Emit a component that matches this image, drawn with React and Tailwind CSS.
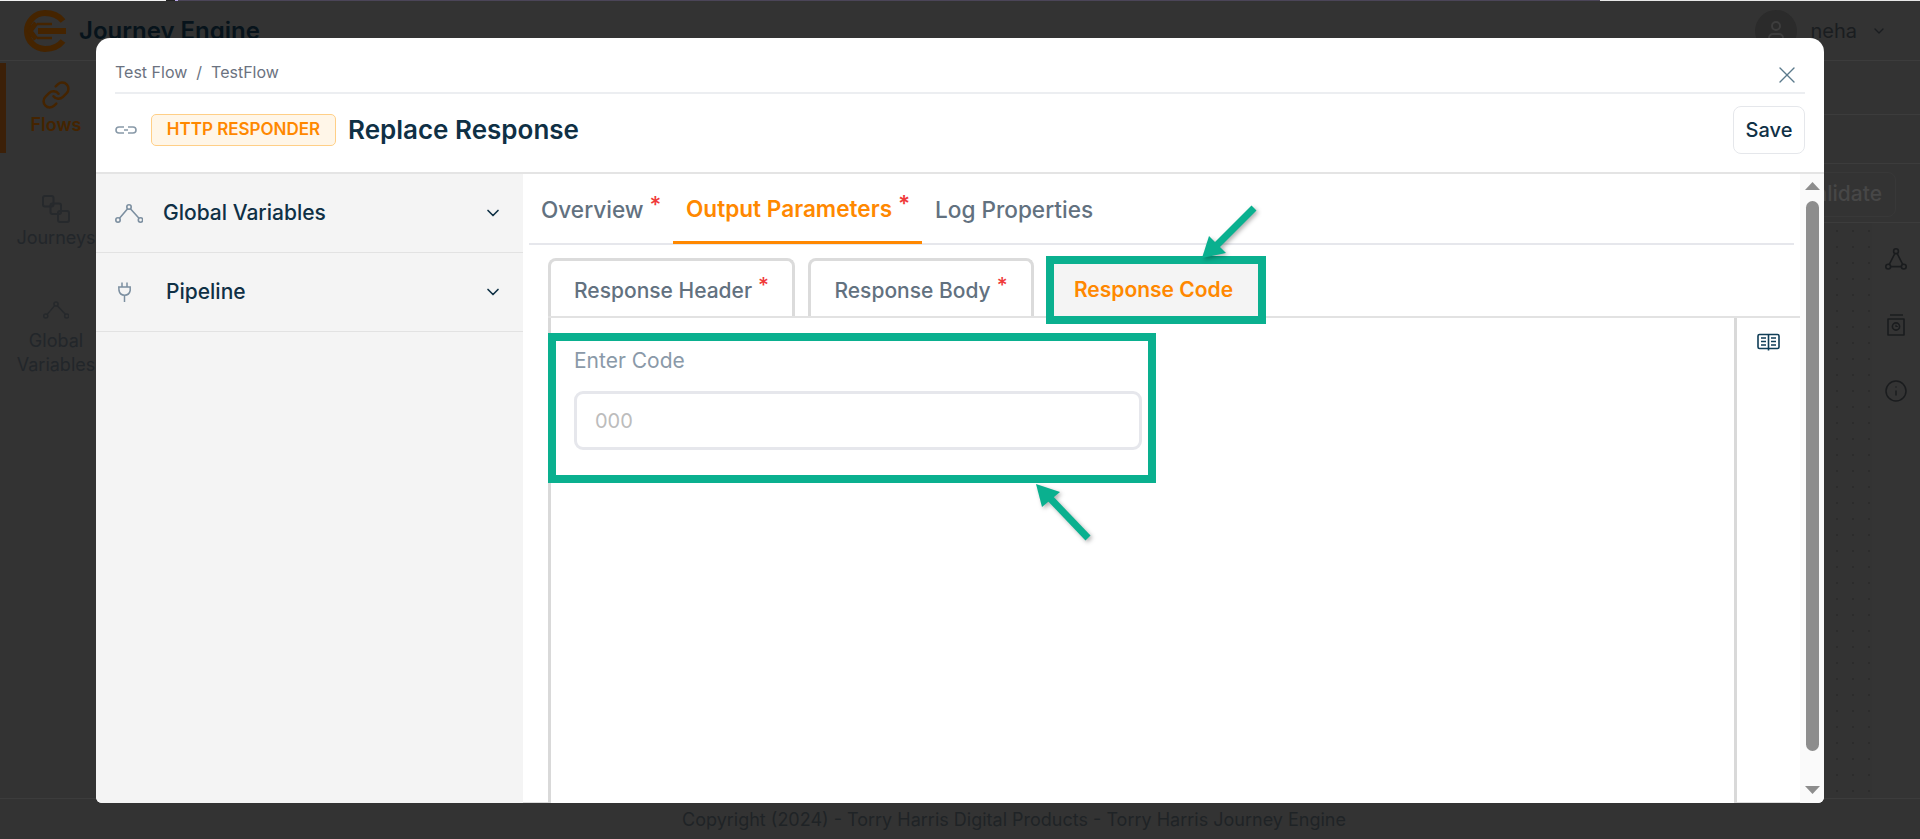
import { ChevronDown, Info, Link, User, X } from 'lucide-react'

const INTER = { fontFamily: 'Inter, "Liberation Sans", sans-serif' }

function Logo() {
  return (
    <svg width="42" height="42" viewBox="0 0 42 42" fill="none" stroke="#452400">
      <path d="M39 11 C35 6 29 3 21 3 A18 18 0 0 0 21 39 C29 39 35 36 39 31" strokeWidth="6" />
      <path d="M13 14 H28 M13 28 H28" strokeWidth="2.5" />
      <path d="M14 21 H42" strokeWidth="6" />
      <path d="M12 13 L6 21 L12 29" strokeWidth="5" />
    </svg>
  )
}

function ChainIcon() {
  return (
    <svg width="22" height="8" viewBox="0 0 22 8" fill="none" stroke="#8899a8" strokeWidth="1.6">
      <path d="M9 1 H4 A3 3 0 0 0 4 7 H9 M9 4 H13 M13 1 H18 A3 3 0 0 1 18 7 H13" />
    </svg>
  )
}

function NodesIcon({ width = 28, height = 19, color = '#7c8fa0', stroke = 1.6 }) {
  return (
    <svg width={width} height={height} viewBox="0 0 28 19" fill="none" stroke={color} strokeWidth={stroke}>
      <circle cx="14" cy="3" r="2.2" />
      <circle cx="3" cy="16" r="2.2" />
      <circle cx="25.5" cy="16" r="2.2" />
      <path d="M12.6 4.8 L4.5 14.2 M15.4 4.8 L24 14.2" />
    </svg>
  )
}

function TriangleIcon() {
  return (
    <svg width="22" height="22" viewBox="0 0 22 22" fill="none" stroke="#1a1c1e" strokeWidth="1.6">
      <circle cx="11" cy="3.2" r="2.4" />
      <circle cx="3.2" cy="18.6" r="2.4" />
      <circle cx="18.8" cy="18.6" r="2.4" />
      <path d="M9.9 5.4 L4.3 16.4 M12.1 5.4 L17.7 16.4 M5.6 18.6 H16.4" />
    </svg>
  )
}

function PlugIcon() {
  return (
    <svg width="13" height="20" viewBox="0 0 13 20" fill="none" stroke="#7c8fa0" strokeWidth="1.5">
      <path d="M4 0.5 V5 M9 0.5 V5 M0.8 5 H12.2 V8.5 A5.7 5.7 0 0 1 1 8.5 Z M6.5 14 V20" />
    </svg>
  )
}

function JourneysIcon() {
  return (
    <svg width="28" height="28" viewBox="0 0 28 28" fill="none" stroke="#26292c" strokeWidth="2">
      <rect x="1" y="1" width="10.5" height="10.5" rx="2" />
      <rect x="8.5" y="8.5" width="10.5" height="10.5" rx="2" />
      <rect x="16" y="16" width="11" height="11" rx="2" />
    </svg>
  )
}

function BookIcon() {
  return (
    <svg width="23" height="18" viewBox="0 0 23 18" fill="none" stroke="#0f3d57" strokeWidth="1.6">
      <rect x="1" y="1.5" width="21" height="14" rx="1.5" />
      <path d="M11.5 1.5 V17.5" />
      <path d="M4 5 H9 M4 8.5 H9 M4 12 H9 M14 5 H19 M14 8.5 H19 M14 12 H19" strokeWidth="1.7" />
    </svg>
  )
}

function HistoryIcon() {
  return (
    <svg width="18" height="22" viewBox="0 0 18 22" fill="none" stroke="#1a1c1e" strokeWidth="1.6">
      <path d="M3 1 H16 M1 5 H17 V21 H1 Z" strokeLinejoin="round" />
      <circle cx="9" cy="12.5" r="3.6" />
      <path d="M9 10.8 V12.5 H10.8" strokeWidth="1.2" />
    </svg>
  )
}

function Star() {
  return <span className="text-[#f03a3a] relative -top-[5px] ml-[6px]">*</span>
}

function NavItem({ icon, label, active, labelGap = 'mt-[3px]' }) {
  return (
    <div className={`flex flex-col items-center ${active ? 'h-full justify-center border-l-[6px] border-[#3c2008] text-[#452400] font-semibold pr-[6px]' : 'text-[#22262a]'}`}>
      {icon}
      <span className={`text-[18px] leading-[24px] text-center ${labelGap}`}>{label}</span>
    </div>
  )
}

function SideRow({ icon, label, height, gap }) {
  return (
    <div className={`flex items-center pl-[19px] pr-[20px] border-b border-[#e2e2e2] ${height}`}>
      <div className={`flex items-center ${gap}`}>
        {icon}
        <span className="text-[21px] font-medium text-[#0f3045]">{label}</span>
      </div>
      <ChevronDown size={20} strokeWidth={2} className="ml-auto text-[#0f3045]" />
    </div>
  )
}

function Arrow({ className, points, line }) {
  return (
    <svg className={`absolute ${className}`} viewBox="0 0 80 70" width="80" height="70" fill="#0ab08f">
      <g style={{ filter: 'drop-shadow(2px 2px 2px rgba(0,0,0,0.3))' }}>
        <path d={line} stroke="#0ab08f" strokeWidth="7" fill="none" />
        <polygon points={points} />
      </g>
    </svg>
  )
}

export default function App() {
  return (
    <div className="relative w-full h-[839px] overflow-hidden flex flex-col bg-[#333333]" style={INTER}>
      {/* strip of the browser above the page */}
      <div className="h-px flex shrink-0">
        <div className="w-[166px] bg-[#f2f2f2]" />
        <div className="w-[9px] bg-[#222222]" />
        <div className="w-[3px] bg-[#b9a6e8]" />
        <div className="w-[1422px] bg-[#4b4558]" />
        <div className="flex-1 bg-[#e8e8e8]" />
      </div>

      {/* app behind the dialog */}
      <header className="h-[60px] shrink-0 flex items-center pl-6 border-b border-[#3c3c3c]">
        <Logo />
        <span className="ml-[13px] text-[24px] font-semibold text-[#07131b]">Journey Engine</span>
        <div className="ml-auto flex items-center pr-[33px]">
          <div className="w-[42px] h-[42px] rounded-full bg-[#2b2b2b] flex items-center justify-center">
            <User size={24} className="text-[#3d3d3d]" />
          </div>
          <span className="ml-[13px] text-[20px] text-[#1a1d20]">neha</span>
          <ChevronDown size={16} className="ml-[14px] text-[#1a1d20]" />
        </div>
      </header>

      <div className="flex-1 flex min-h-0">
        <nav className="w-[112px] shrink-0 pt-[2px] flex flex-col">
          <div className="h-[90px]">
            <NavItem active icon={<Link size={30} strokeWidth={2} />} label="Flows" />
          </div>
          <div className="mt-[42px]">
            <NavItem icon={<JourneysIcon />} label="Journeys" />
          </div>
          <div className="mt-[50px]">
            <NavItem
              icon={<NodesIcon width={26} height={20} color="#26292c" />}
              labelGap="mt-[9px]"
              label={<>Global<br />Variables</>}
            />
          </div>
        </nav>
        <div className="flex-1 flex flex-col min-w-0">
          <div className="h-[54px] border-b border-[#3c3c3c]" />
          <div className="h-[49px] border-b border-[#3c3c3c]" />
          <div className="h-[59px] pt-[2px] border-b border-[#3c3c3c] flex items-center justify-end pr-6">
            <div className="h-[45px] px-[13px] flex items-center rounded-lg border border-[#383838] text-[21px] font-medium text-[#474747]">Validate</div>
          </div>
          <div className="flex-1 flex">
            <div className="flex-1 bg-[radial-gradient(#2c2c2c_1px,transparent_1px)] bg-[size:16px_16px] bg-[position:5px_0px]" />
            <aside className="w-[48px] bg-[#343434] flex flex-col items-center pt-[25px]">
              <TriangleIcon />
              <div className="mt-[44px]"><HistoryIcon /></div>
              <Info size={24} strokeWidth={1.5} className="mt-[43px] text-[#1a1c1e]" />
            </aside>
          </div>
        </div>
      </div>

      <footer className="h-[41px] shrink-0 border-t border-[#3c3c3c] flex items-center justify-center pl-[108px] text-[18px] text-[#1f2326]">
        Copyright (2024) - Torry Harris Digital Products - Torry Harris Journey Engine
      </footer>

      {/* dialog */}
      <div className="absolute left-[96px] top-[38px] w-[1728px] h-[765px] bg-white rounded-t-[14px] rounded-b-[6px] overflow-hidden flex flex-col">
        <div className="px-[19px] shrink-0">
          <div className="h-[56px] pt-[13px] flex items-center justify-between border-b-2 border-[#eceef1] text-[16px] text-[#6b7280]">
            <span>Test Flow&nbsp; /&nbsp; TestFlow</span>
            <X size={28} strokeWidth={1.2} className="text-[#5b7a8c] mr-[4px] mt-[7px]" />
          </div>
          <div className="h-[78px] pb-[6px] flex items-center">
            <ChainIcon />
            <span className="ml-[14px] h-[32px] w-[185px] flex items-center justify-center rounded-[5px] border border-[#ffcf87] bg-[#fff6e8] text-[17px] font-semibold text-[#ff8800]">HTTP RESPONDER</span>
            <span className="ml-[12px] -mt-[2px] text-[26px] font-semibold text-[#0f3045]">Replace Response</span>
            <button className="ml-auto w-[72px] h-[48px] rounded-lg border border-[#e5e7eb] text-[20px] font-medium text-[#0f3045]">Save</button>
          </div>
        </div>

        <div className="flex-1 flex min-h-0 border-t-2 border-[#e4e4e4]">
          <aside className="w-[427px] shrink-0 bg-[#f4f4f4]">
            <SideRow icon={<NodesIcon />} label="Global Variables" height="h-[79px]" gap="gap-[20px]" />
            <SideRow icon={<PlugIcon />} label="Pipeline" height="h-[79px]" gap="gap-[35px] pl-[3px]" />
          </aside>

          <main className="flex-1 flex min-w-0">
            <div className="flex-1 flex flex-col min-w-0">
              <div className="mx-[6px] h-[71px] shrink-0 flex border-b-2 border-[#e6e7ec] text-[22.6px] font-medium text-[#62717f]">
                <div className="w-[144px] pl-[12px] pt-[2px] flex items-center">Overview<Star /></div>
                <div className="w-[249px] pl-[13px] pt-[2px] flex items-center h-[70px] border-b-[3px] border-[#ff8800] text-[#ff8800] font-semibold">Output Parameters<Star /></div>
                <div className="pl-[13px] pt-[2px] flex items-center">Log Properties</div>
              </div>

              <div className="flex-1 flex min-h-0">
                <div className="w-[25px] shrink-0 border-b border-[#dcdcdc]" />
                <div className="flex-1 flex flex-col min-w-0">
                  <div className="h-[73px] shrink-0 pt-[13px] flex items-stretch border-b-2 border-[#e2e2e2] text-[21px] font-medium text-[#62717f]">
                    <div className="w-[247px] pt-[4px] flex items-center justify-center border-[3px] border-b-0 border-[#dbdbdb] rounded-t-lg">Response Header<Star /></div>
                    <div className="ml-[13px] w-[226px] pt-[4px] flex items-center justify-center border-[3px] border-b-0 border-[#dbdbdb] rounded-t-lg">Response Body<Star /></div>
                    <div className="ml-[20px] mt-[6px] w-[204px] pr-[5px] flex items-center justify-center bg-[#f4f4f4] outline-8 outline-[#0ab08f] text-[#ff8800] font-semibold">Response Code</div>
                  </div>

                  <div className="flex-1 flex min-h-0">
                    <div className="flex-1 border-l-[3px] border-r-[3px] border-[#d9d9d9] min-w-0">
                      <div className="-ml-[3px] mt-[15px] w-[608px] h-[150px] border-8 border-[#0ab08f] pl-[18px] pt-[7px]">
                        <div className="text-[21px] leading-[26px] text-[#8a99a8]">Enter Code</div>
                        <div className="mt-[17px] w-[568px] h-[59px] rounded-[9px] border-[3px] border-[#e6e7ec] flex items-center pl-[18px] text-[20px] text-[#bcbcbc]">000</div>
                      </div>
                    </div>
                    <div className="w-[63px] shrink-0 flex justify-center pt-[15px] border-b border-[#dcdcdc]">
                      <BookIcon />
                    </div>
                  </div>
                </div>
              </div>
            </div>

            {/* scrollbar */}
            <div className="w-[24px] shrink-0 bg-[#fafafa] flex flex-col items-center pt-[8px]">
              <svg width="15" height="8" viewBox="0 0 15 8" fill="#8d8d8d"><polygon points="7.5,0 15,8 0,8" /></svg>
              <div className="mt-[11px] w-[13px] h-[550px] rounded-full bg-[#8d8d8d]" />
              <svg className="mt-[35px]" width="15" height="8" viewBox="0 0 15 8" fill="#8d8d8d"><polygon points="0,0 15,0 7.5,8" /></svg>
            </div>
          </main>
        </div>
      </div>

      {/* annotation arrows */}
      <Arrow className="left-[1190px] top-[198px]" line="M64 10 L24 50" points="12,60 19,38 36,55" />
      <Arrow className="left-[1026px] top-[476px]" line="M62 62 L20 18" points="10,8 34,16 16,31" />
    </div>
  )
}
